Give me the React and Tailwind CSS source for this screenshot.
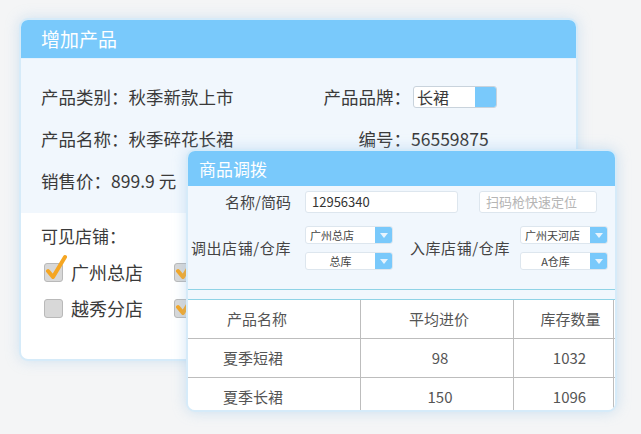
import React from "react";

const font = { fontFamily: '"Noto Sans CJK SC", "Noto Sans", sans-serif' };

const Arrow = () => (
  <div className="w-[17px] h-full bg-[#79c9fb] flex items-center justify-center">
    <svg width="8" height="5" viewBox="0 0 8 5">
      <path d="M0 0 L8 0 L4 5 Z" fill="#e8f4fd" />
    </svg>
  </div>
);

const Select = ({ value, center }) => (
  <div className="w-[88px] h-[18px] bg-white border border-[#dde6ee] rounded-[3px] flex overflow-hidden">
    <div
      className={`flex-1 text-[11px] leading-[16px] text-[#444] ${center ? "text-center" : "pl-[4px]"}`}
    >
      {value}
    </div>
    <Arrow />
  </div>
);

const Check = ({ checked, label }) => (
  <div className="flex items-center h-[20px]">
    <div className="relative w-[19px] h-[19px] bg-[#d8d8d8] border border-[#b9b9b9] rounded-[3px] mr-[8px] shrink-0">
      {checked && (
        <svg className="absolute -top-[10px] left-[0px]" width="22" height="28" viewBox="0 0 22 28">
          <path
            d="M3 17 L8 23 L20 3"
            fill="none"
            stroke="#f5a623"
            strokeWidth="4"
            strokeLinecap="round"
            strokeLinejoin="round"
          />
        </svg>
      )}
    </div>
    {label && <span className="text-[18px] text-[#3a3a3a] whitespace-nowrap">{label}</span>}
  </div>
);

const rows = [
  { name: "夏季短裙", price: "98", qty: "1032" },
  { name: "夏季长裙", price: "150", qty: "1096" },
];

export default function App() {
  return (
    <div className="relative w-[641px] h-[434px] bg-[#f4f5f6] overflow-hidden" style={font}>
      {/* 增加产品 */}
      <div className="absolute left-[19px] top-[18px] w-[559px] h-[343px] bg-white border-2 border-[#d6ebf9] rounded-[9px] shadow-[0_0_14px_rgba(140,190,230,0.35)] overflow-hidden flex flex-col">
        <div className="h-[39px] bg-[#79c9fb] flex items-center pl-[20px] text-white text-[19px] shrink-0 border-b border-[#e4f2fd]">
          增加产品
        </div>
        <div className="bg-[#f1f7fd] pt-[17px] h-[154px] shrink-0 text-[17.5px] text-[#3a3a3a]">
          <div className="flex h-[42px] items-center">
            <div className="w-[300px] pl-[20px] whitespace-nowrap">产品类别：秋季新款上市</div>
            <div className="w-[90px] text-right whitespace-nowrap">产品品牌：</div>
            <div className="ml-[2px] w-[84px] h-[22px] bg-white border border-[#c9d3dc] rounded-[3px] flex overflow-hidden">
              <div className="flex-1 text-[16px] leading-[20px] pl-[3px]">长裙</div>
              <div className="w-[21px] bg-[#79c9fb]" />
            </div>
          </div>
          <div className="flex h-[42px] items-center">
            <div className="w-[300px] pl-[20px] whitespace-nowrap">产品名称：秋季碎花长裙</div>
            <div className="w-[90px] text-right whitespace-nowrap">编号：</div>
            <div>56559875</div>
          </div>
          <div className="flex h-[42px] items-center">
            <div className="pl-[20px]">销售价：899.9 元</div>
          </div>
        </div>
        <div className="flex-1 pl-[20px] pt-[11px]">
          <div className="text-[17px] text-[#3a3a3a] h-[24px] leading-[24px]">可见店铺：</div>
          <div className="mt-[14px] flex flex-col gap-[16px] pl-[3px]">
            <div className="flex">
              <div className="w-[130px]">
                <Check checked label="广州总店" />
              </div>
              <Check checked />
            </div>
            <div className="flex">
              <div className="w-[130px]">
                <Check label="越秀分店" />
              </div>
              <Check checked />
            </div>
          </div>
        </div>
      </div>

      {/* 商品调拨 (overlay window) */}
      <div className="absolute left-[186px] top-[149px] w-[431px] h-[263px] bg-[#f1f7fd] border-2 border-[#d6ebf9] rounded-[9px] shadow-[0_0_14px_rgba(140,190,230,0.4)] overflow-hidden flex flex-col">
        <div className="h-[35px] bg-[#79c9fb] flex items-center pl-[11px] text-white text-[17px] shrink-0">
          商品调拨
        </div>
        <div className="pt-[5px] text-[15px] text-[#444] shrink-0">
          <div className="flex items-center h-[22px]">
            <div className="w-[103px] text-right">名称/简码</div>
            <div className="ml-[14px] w-[153px] h-[22px] bg-white border border-[#dde6ee] rounded-[3px] text-[13px] leading-[20px] pl-[6px] text-[#333]">
              12956340
            </div>
            <div className="ml-[21px] w-[118px] h-[22px] bg-white border border-[#dde6ee] rounded-[3px] text-[13px] leading-[20px] pl-[6px] text-[#b5b5b5]">
              扫码枪快速定位
            </div>
          </div>
          <div className="flex items-center mt-[13px]">
            <div className="w-[103px] text-right whitespace-nowrap tracking-[0.6px]">调出店铺/仓库</div>
            <div className="ml-[14px] flex flex-col gap-[8px]">
              <Select value="广州总店" />
              <Select value="总库" center />
            </div>
            <div className="w-[117px] text-right whitespace-nowrap tracking-[0.6px]">入库店铺/仓库</div>
            <div className="ml-[10px] flex flex-col gap-[8px]">
              <Select value="广州天河店" />
              <Select value="A仓库" center />
            </div>
          </div>
        </div>
        <div className="mt-[19px] border-t border-[#8fd3e6] h-[10px] shrink-0" />
        <div className="bg-white border-t border-[#8fd3e6] shrink-0 text-[15px] text-[#555]">
          <div className="flex h-[39px] items-center border-b border-[#bdbdbd]">
            <div className="w-[173px] h-full flex items-center pl-[39px] border-r border-[#bdbdbd]">产品名称</div>
            <div className="w-[153px] h-full flex items-center justify-center pl-[4px] border-r border-[#bdbdbd]">平均进价</div>
            <div className="w-[100px] h-full flex items-center justify-center pl-[14px] border-r border-[#bdbdbd]">库存数量</div>
          </div>
          {rows.map((r) => (
            <div key={r.name} className="flex h-[39px] items-center border-b border-[#bdbdbd]">
              <div className="w-[173px] h-full flex items-center pl-[35px] border-r border-[#bdbdbd]">{r.name}</div>
              <div className="w-[153px] h-full flex items-center justify-center pl-[6px] border-r border-[#bdbdbd]">{r.price}</div>
              <div className="w-[100px] h-full flex items-center justify-center pl-[12px] border-r border-[#bdbdbd]">{r.qty}</div>
            </div>
          ))}
        </div>
      </div>
    </div>
  );
}
